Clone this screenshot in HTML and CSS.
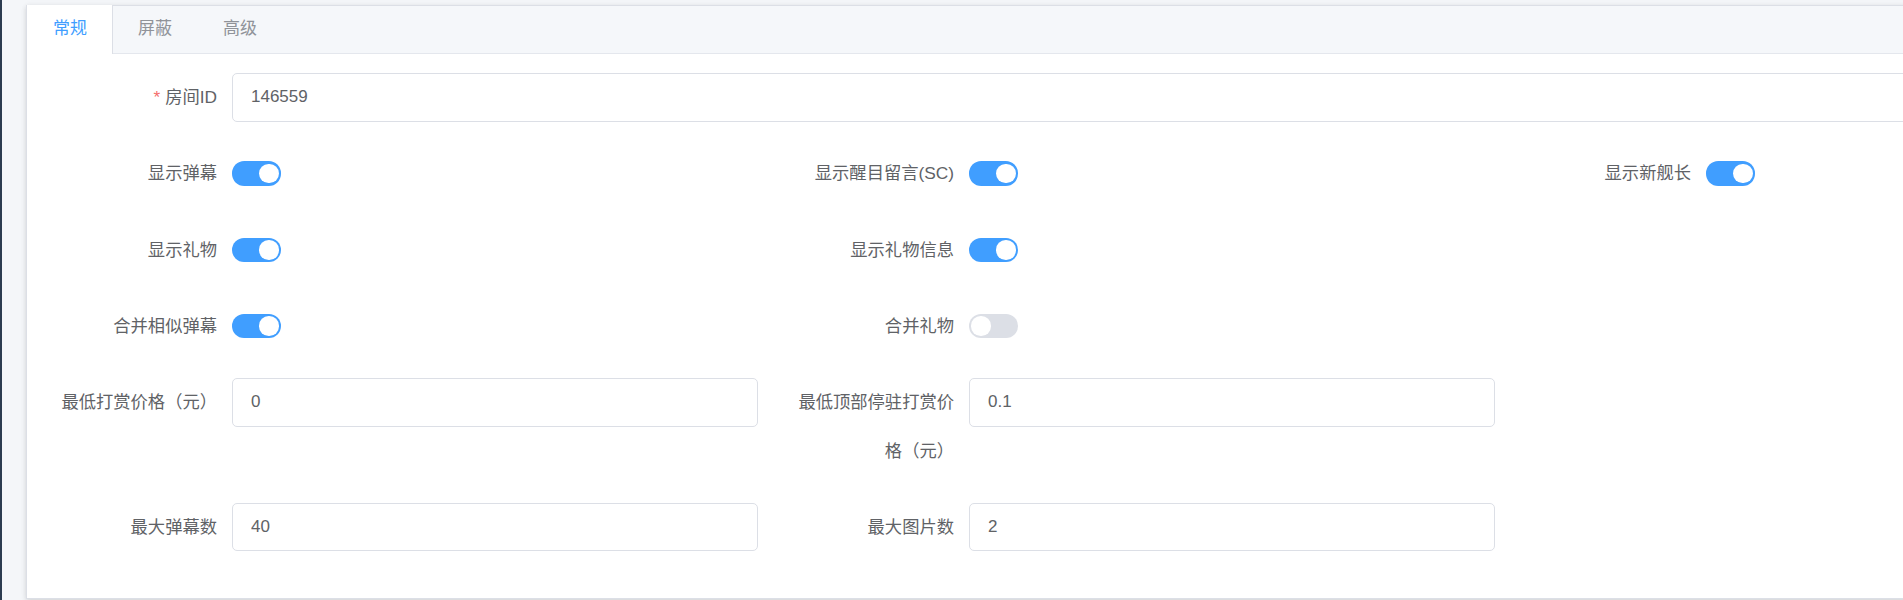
FILE: index.html
```html
<!DOCTYPE html>
<html lang="zh-CN">
<head>
<meta charset="utf-8">
<title>设置</title>
<link rel="stylesheet" href="styles.css">
</head>
<body>
<div class="layout">
  <aside class="sidebar"></aside>
  <main class="main">
    <div class="card">
      <div class="tabs-header">
        <div class="tab active">常规</div>
        <div class="tab">屏蔽</div>
        <div class="tab">高级</div>
      </div>
      <div class="tabs-content">
        <form class="form">
          <div class="item span-all">
            <label class="label"><span class="req">*</span>房间ID</label>
            <div class="control"><input class="input" value="146559"></div>
          </div>

          <div class="item">
            <label class="label">显示弹幕</label>
            <div class="control"><span class="switch on"><span class="knob"></span></span></div>
          </div>
          <div class="item">
            <label class="label">显示醒目留言(SC)</label>
            <div class="control"><span class="switch on"><span class="knob"></span></span></div>
          </div>
          <div class="item">
            <label class="label">显示新舰长</label>
            <div class="control"><span class="switch on"><span class="knob"></span></span></div>
          </div>

          <div class="item">
            <label class="label">显示礼物</label>
            <div class="control"><span class="switch on"><span class="knob"></span></span></div>
          </div>
          <div class="item">
            <label class="label">显示礼物信息</label>
            <div class="control"><span class="switch on"><span class="knob"></span></span></div>
          </div>
          <div class="cell-empty"></div>

          <div class="item">
            <label class="label">合并相似弹幕</label>
            <div class="control"><span class="switch on"><span class="knob"></span></span></div>
          </div>
          <div class="item">
            <label class="label">合并礼物</label>
            <div class="control"><span class="switch"><span class="knob"></span></span></div>
          </div>
          <div class="cell-empty"></div>

          <div class="item">
            <label class="label">最低打赏价格（元）</label>
            <div class="control"><input class="input" value="0"></div>
          </div>
          <div class="item">
            <label class="label">最低顶部停驻打赏价格（元）</label>
            <div class="control"><input class="input" value="0.1"></div>
          </div>
          <div class="cell-empty"></div>

          <div class="item">
            <label class="label">最大弹幕数</label>
            <div class="control"><input class="input" value="40"></div>
          </div>
          <div class="item">
            <label class="label">最大图片数</label>
            <div class="control"><input class="input" value="2"></div>
          </div>
          <div class="cell-empty"></div>
        </form>
      </div>
    </div>
  </main>
</div>
</body>
</html>
```

FILE: styles.css
```css
* { box-sizing: border-box; }

html, body {
  margin: 0;
  padding: 0;
  width: 1903px;
  height: 600px;
  overflow: hidden;
  font-family: "Liberation Sans", "Noto Sans CJK SC", sans-serif;
  background: #f5f7fa;
}

.layout {
  display: flex;
  width: 1903px;
  height: 600px;
  overflow: hidden;
}

.sidebar {
  flex: 0 0 2px;
  background: #2c3b50;
}

.main {
  flex: 1;
  min-width: 0;
  padding: 5px 0 0 24px;
  background: #f4f6f9;
  overflow: hidden;
}

.card {
  width: 2225px;
  flex-shrink: 0;
  background: #fff;
  border: 1px solid #dcdfe6;
  box-shadow: 0 2px 5px 0 rgba(0, 0, 0, 0.12), 0 0 7px 0 rgba(0, 0, 0, 0.04);
}

.tabs-header {
  display: flex;
  height: 48px;
  background: #f5f7fa;
  border-bottom: 1px solid #e4e7ed;
}

.tab {
  height: 48px;
  line-height: 47px;
  padding: 0 25px;
  font-size: 17px;
  color: #909399;
  border-left: 1px solid transparent;
  border-right: 1px solid transparent;
  margin-top: -1px;
  margin-left: -1px;
}

.tab:first-child { padding-left: 26px; }

.tab.active {
  color: #409eff;
  background: #fff;
  border-left-color: #dcdfe6;
  border-right-color: #dcdfe6;
  height: 49px;
  margin-bottom: -1px;
}

.tabs-content {
  padding: 19px 18px 19px;
}

.form {
  display: grid;
  grid-template-columns: repeat(3, 713px);
  column-gap: 24px;
  row-gap: 27.75px;
  padding-bottom: 27.75px;
}

.span-all { grid-column: 1 / -1; }

.item {
  display: flex;
  align-items: flex-start;
}

.label {
  flex: 0 0 187px;
  width: 187px;
  padding-right: 15px;
  text-align: right;
  font-size: 17.3px;
  line-height: 48.5px;
  color: #606266;
}

.req {
  color: #f56c6c;
  margin-right: 5px;
}

.control {
  flex: 1;
  min-width: 0;
  height: 48.5px;
  display: flex;
  align-items: center;
}

.input {
  width: 100%;
  height: 48.5px;
  padding: 0 18px;
  border: 1px solid #dcdfe6;
  border-radius: 5px;
  background: #fff;
  font-family: "Liberation Sans", "Noto Sans CJK SC", sans-serif;
  font-size: 17px;
  color: #606266;
  outline: none;
}

.switch {
  width: 49px;
  height: 24.5px;
  border-radius: 12.25px;
  background: #dcdfe6;
  display: flex;
  align-items: center;
  justify-content: flex-start;
  padding: 0 2.4px;
}

.switch.on {
  background: #409eff;
  justify-content: flex-end;
}

.knob {
  width: 19.5px;
  height: 19.5px;
  border-radius: 50%;
  background: #fff;
}
```
